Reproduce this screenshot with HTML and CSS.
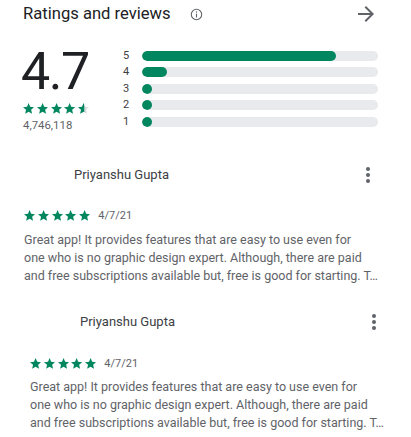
FILE: index.html
```html
<!DOCTYPE html>
<html lang="en">
<head>
<meta charset="utf-8">
<title>Ratings and reviews</title>
<link rel="stylesheet" href="styles.css">
</head>
<body>
<svg class="defs" width="0" height="0" aria-hidden="true">
  <defs>
    <path id="star" d="M12 17.27L18.18 21l-1.64-7.03L22 9.24l-7.19-.61L12 2 9.19 8.63 2 9.24l5.46 4.73L5.82 21z"/>
    <clipPath id="half"><rect x="0" y="0" width="13.2" height="24"/></clipPath>
  </defs>
</svg>

<header class="head">
  <h2 class="title">Ratings and reviews</h2>
  <svg class="info" viewBox="0 0 24 24"><circle cx="12" cy="12" r="9.6" fill="none" stroke="currentColor" stroke-width="2"/><rect x="11" y="10.5" width="2" height="7" fill="currentColor"/><circle cx="12" cy="7.4" r="1.25" fill="currentColor"/></svg>
  <svg class="arrow" viewBox="0 0 24 24"><path d="M12 4l-1.41 1.41L16.17 11H4v2h12.17l-5.58 5.59L12 20l8-8z" fill="currentColor"/></svg>
</header>

<section class="summary">
  <div class="score">
    <div class="big">4.7</div>
    <div class="stars">
      <svg class="star" viewBox="2 2 20 19.27"><use href="#star"/></svg>
      <svg class="star" viewBox="2 2 20 19.27"><use href="#star"/></svg>
      <svg class="star" viewBox="2 2 20 19.27"><use href="#star"/></svg>
      <svg class="star" viewBox="2 2 20 19.27"><use href="#star"/></svg>
      <svg class="star" viewBox="2 2 20 19.27"><use href="#star" class="star-empty"/><g clip-path="url(#half)"><use href="#star"/></g></svg>
    </div>
    <div class="count">4,746,118</div>
  </div>
  <div class="bars">
    <span class="lbl">5</span><div class="track"><div class="fill" style="width:82%"></div></div>
    <span class="lbl">4</span><div class="track"><div class="fill" style="width:10.5%"></div></div>
    <span class="lbl">3</span><div class="track"><div class="fill" style="width:4.2%"></div></div>
    <span class="lbl">2</span><div class="track"><div class="fill" style="width:4.2%"></div></div>
    <span class="lbl">1</span><div class="track"><div class="fill" style="width:4.2%"></div></div>
  </div>
</section>

<article class="review">
  <div class="rev-head">
    <span class="name">Priyanshu Gupta</span>
    <svg class="more" viewBox="0 0 24 24"><circle cx="12" cy="6" r="2" fill="currentColor"/><circle cx="12" cy="12" r="2" fill="currentColor"/><circle cx="12" cy="18" r="2" fill="currentColor"/></svg>
  </div>
  <div class="rev-meta">
    <div class="stars">
      <svg class="star" viewBox="2 2 20 19.27"><use href="#star"/></svg>
      <svg class="star" viewBox="2 2 20 19.27"><use href="#star"/></svg>
      <svg class="star" viewBox="2 2 20 19.27"><use href="#star"/></svg>
      <svg class="star" viewBox="2 2 20 19.27"><use href="#star"/></svg>
      <svg class="star" viewBox="2 2 20 19.27"><use href="#star"/></svg>
    </div>
    <span class="date">4/7/21</span>
  </div>
  <p class="text">
    <span class="line">Great app! It provides features that are easy to use even for</span>
    <span class="line">one who is no graphic design expert. Although, there are paid</span>
    <span class="line">and free subscriptions available but, free is good for starting. T…</span>
  </p>
</article>

<article class="review review--shift">
  <div class="rev-head">
    <span class="name">Priyanshu Gupta</span>
    <svg class="more" viewBox="0 0 24 24"><circle cx="12" cy="6" r="2" fill="currentColor"/><circle cx="12" cy="12" r="2" fill="currentColor"/><circle cx="12" cy="18" r="2" fill="currentColor"/></svg>
  </div>
  <div class="rev-meta">
    <div class="stars">
      <svg class="star" viewBox="2 2 20 19.27"><use href="#star"/></svg>
      <svg class="star" viewBox="2 2 20 19.27"><use href="#star"/></svg>
      <svg class="star" viewBox="2 2 20 19.27"><use href="#star"/></svg>
      <svg class="star" viewBox="2 2 20 19.27"><use href="#star"/></svg>
      <svg class="star" viewBox="2 2 20 19.27"><use href="#star"/></svg>
    </div>
    <span class="date">4/7/21</span>
  </div>
  <p class="text">
    <span class="line">Great app! It provides features that are easy to use even for</span>
    <span class="line">one who is no graphic design expert. Although, there are paid</span>
    <span class="line">and free subscriptions available but, free is good for starting. T…</span>
  </p>
</article>
</body>
</html>
```

FILE: styles.css
```css
* { box-sizing: border-box; }

html, body {
  margin: 0;
  padding: 0;
  background: #ffffff;
}

body {
  font-family: Roboto, "Liberation Sans", Arial, sans-serif;
  color: #202124;
  width: 411px;
  overflow: hidden;
}

.defs {
  position: absolute;
  width: 0;
  height: 0;
}

.head {
  display: flex;
  align-items: center;
  height: 28px;
  padding: 0 33px 0 23px;
}

.title {
  margin: 0;
  font-size: 16.6px;
  font-weight: 400;
  line-height: 20px;
  color: #202124;
}

.info {
  width: 13px;
  height: 13px;
  margin-left: 19px;
  color: #5f6368;
}

.arrow {
  width: 24px;
  height: 24px;
  margin-left: auto;
  color: #5f6368;
}

.summary {
  display: flex;
  margin-top: 18px;
  padding: 0 33px 0 23px;
}

.score {
  width: 100px;
  flex: none;
}

.big {
  font-size: 52px;
  line-height: 52px;
  height: 52px;
  letter-spacing: -1.5px;
  color: #202124;
  margin-left: -2px;
}

.stars {
  display: flex;
  gap: 2.6px;
  height: 11px;
  color: #01875f;
  fill: #01875f;
}

.score .stars {
  margin-top: 5px;
}

.star {
  width: 11.2px;
  height: 11px;
  display: block;
}

.star-empty {
  fill: #dadce0;
}

.count {
  margin-top: 4px;
  font-size: 11.4px;
  line-height: 14px;
  color: #5f6368;
}

.bars {
  flex: 1;
  display: grid;
  grid-template-columns: 19px 1fr;
  grid-auto-rows: 10px;
  row-gap: 6.55px;
  align-items: center;
  padding-top: 4.5px;
}

.lbl {
  font-size: 11px;
  line-height: 10px;
  color: #3c4043;
}

.track {
  height: 10px;
  border-radius: 5px;
  background: #e8eaed;
  overflow: hidden;
}

.fill {
  height: 100%;
  min-width: 10px;
  border-radius: 5px;
  background: #01875f;
}

.review {
  padding: 0 31px 0 24px;
  margin-top: 31px;
}

.review--shift {
  margin-top: 25px;
  margin-left: 6px;
  margin-right: -6px;
}

.rev-head {
  display: flex;
  align-items: center;
  height: 24px;
}

.name {
  margin-left: 50px;
  font-size: 13px;
  line-height: 16px;
  color: #3c4043;
}

.more {
  width: 24px;
  height: 24px;
  margin-left: auto;
  color: #5f6368;
}

.rev-meta {
  display: flex;
  align-items: center;
  gap: 8px;
  height: 12px;
  margin-top: 22.5px;
}

.review--shift .rev-meta {
  margin-top: 24px;
}

.date {
  font-size: 11px;
  line-height: 12px;
  color: #5f6368;
}

.text {
  margin: 9px 0 0;
  font-size: 12.5px;
  line-height: 18px;
  color: #5f6368;
}

.review--shift .text {
  margin-top: 8px;
}

.line {
  display: block;
  white-space: nowrap;
}
```
